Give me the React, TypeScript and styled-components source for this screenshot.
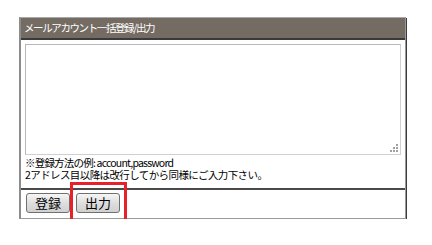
import React from "react";
import styled, { createGlobalStyle } from "styled-components";

const Global = createGlobalStyle`
	body {
		margin: 0;
		background: #ffffff;
		font-family: "Noto Sans CJK JP", "Liberation Sans", sans-serif;
	}
`;

const Page = styled.div`
	padding: 17px 0 0 19px;
`;

const Panel = styled.div`
	width: 384px;
	border-top: 1px solid #a8a8a8;
	border-left: 2px solid #8c8c8c;
	border-right: 1px solid #9a9a9a;
	border-bottom: 1px solid #9a9a9a;
	box-shadow: 1px 1px 0 #3c3c3c;
	display: flex;
	flex-direction: column;
`;

const Header = styled.div`
	height: 20px;
	background: #746c62;
	color: #ffffff;
	font-size: 10.5px;
	letter-spacing: -1.4px;
	line-height: 20px;
	padding-left: 3px;
	border-bottom: 2px solid #3a3a3a;
	white-space: nowrap;
`;

const Body = styled.div`
	padding: 4px 3px 7px 4px;
	border-bottom: 2px solid #4a4a4a;
`;

const AreaWrap = styled.div`
	position: relative;
	width: 376px;
	height: 111px;
	margin-bottom: 2px;
`;

const Area = styled.textarea`
	box-sizing: border-box;
	width: 100%;
	height: 100%;
	margin: 0;
	border: 1px solid #d0d0d0;
	border-top-color: #b8b8b8;
	border-left-color: #b8b8b8;
	resize: none;
	display: block;
	background: #ffffff;
`;

const Grip = styled.svg`
	position: absolute;
	right: 3px;
	bottom: 3px;
`;

const Notes = styled.p`
	margin: 0;
	height: 24px;
	font-size: 10.5px;
	line-height: 12px;
	color: #000000;
	white-space: nowrap;
	letter-spacing: -0.8px;
`;

const Tight = styled.span`
	letter-spacing: -0.6px;
`;

const Footer = styled.div`
	position: relative;
	display: flex;
	gap: 6px;
	padding: 3px 0 5px 5px;
`;

const Button = styled.button`
	width: 44px;
	height: 20px;
	padding: 0;
	font-family: "Noto Sans CJK JP", sans-serif;
	font-size: 13px;
	line-height: 18px;
	color: #000000;
	border: 1px solid #707070;
	border-radius: 3px;
	background: linear-gradient(#f6f6f6, #dedede 50%, #d0d0d0);
`;

const Highlight = styled.div`
	position: absolute;
	left: 49px;
	top: -8px;
	width: 51px;
	height: 39px;
	border: 3px solid #e8202a;
	pointer-events: none;
`;

const dots = [
	[6, 0],
	[3, 3],
	[6, 3],
	[0, 6],
	[3, 6],
	[6, 6],
];

export default function App() {
	return (
		<Page>
			<Global />
			<Panel>
				<Header>メールアカウント一括登録/出力</Header>
				<Body>
					<AreaWrap>
						<Area />
						<Grip width="8" height="8" viewBox="0 0 8 8">
							{dots.map(([x, y]) => (
								<rect key={`${x}-${y}`} x={x} y={y} width="2" height="2" fill="#a0a0a0" />
							))}
						</Grip>
					</AreaWrap>
					<Notes>
						※登録方法の例: account,password
						<br />
						<Tight>2アドレス目以降は改行してから同様にご入力下さい。</Tight>
					</Notes>
				</Body>
				<Footer>
					<Button>登録</Button>
					<Button>出力</Button>
					<Highlight />
				</Footer>
			</Panel>
		</Page>
	);
}
